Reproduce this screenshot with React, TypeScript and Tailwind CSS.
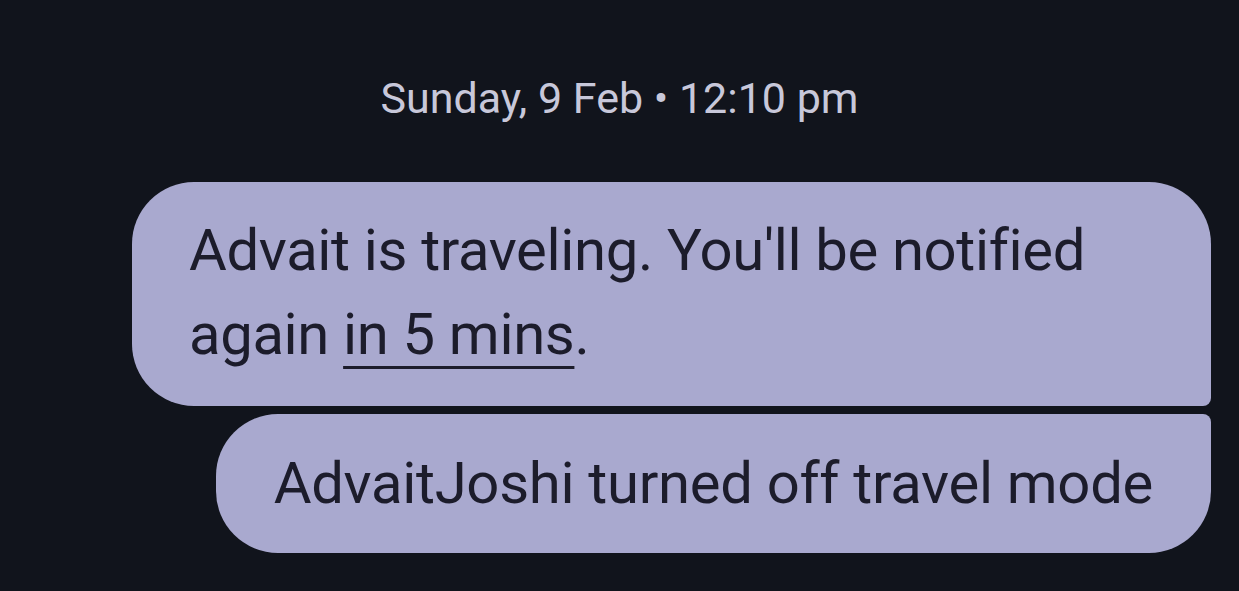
export default function App() {
  return (
    <div
      className="w-[1239px] h-[591px] bg-[#11141c] overflow-hidden flex flex-col items-center"
      style={{ fontFamily: "Roboto, 'Noto Sans', sans-serif" }}
    >
      <div className="mt-[74px] text-[43px] leading-[48px] text-[#c8c8da]">
        Sunday, 9 Feb • 12:10 pm
      </div>
      <div className="mt-[60px] w-full flex flex-col items-end gap-[8px] pr-[28px]">
        <div className="w-[1079px] bg-[#a9a9cf] text-[#1c1c2b] text-[58px] leading-[84px] tracking-[-0.35px] pl-[57px] pr-[40px] pt-[26px] pb-[30px] rounded-tl-[62px] rounded-tr-[62px] rounded-bl-[62px] rounded-br-[8px]">
          Advait is traveling. You'll be notified again{" "}
          <span className="underline decoration-[3px] underline-offset-[12px]">in 5 mins</span>.
        </div>
        <div className="bg-[#a9a9cf] text-[#1c1c2b] text-[58px] leading-[84px] tracking-[-0.3px] px-[58px] pt-[27px] pb-[28px] rounded-tl-[62px] rounded-tr-[8px] rounded-bl-[62px] rounded-br-[62px] whitespace-nowrap">
          AdvaitJoshi turned off travel mode
        </div>
      </div>
    </div>
  );
}
